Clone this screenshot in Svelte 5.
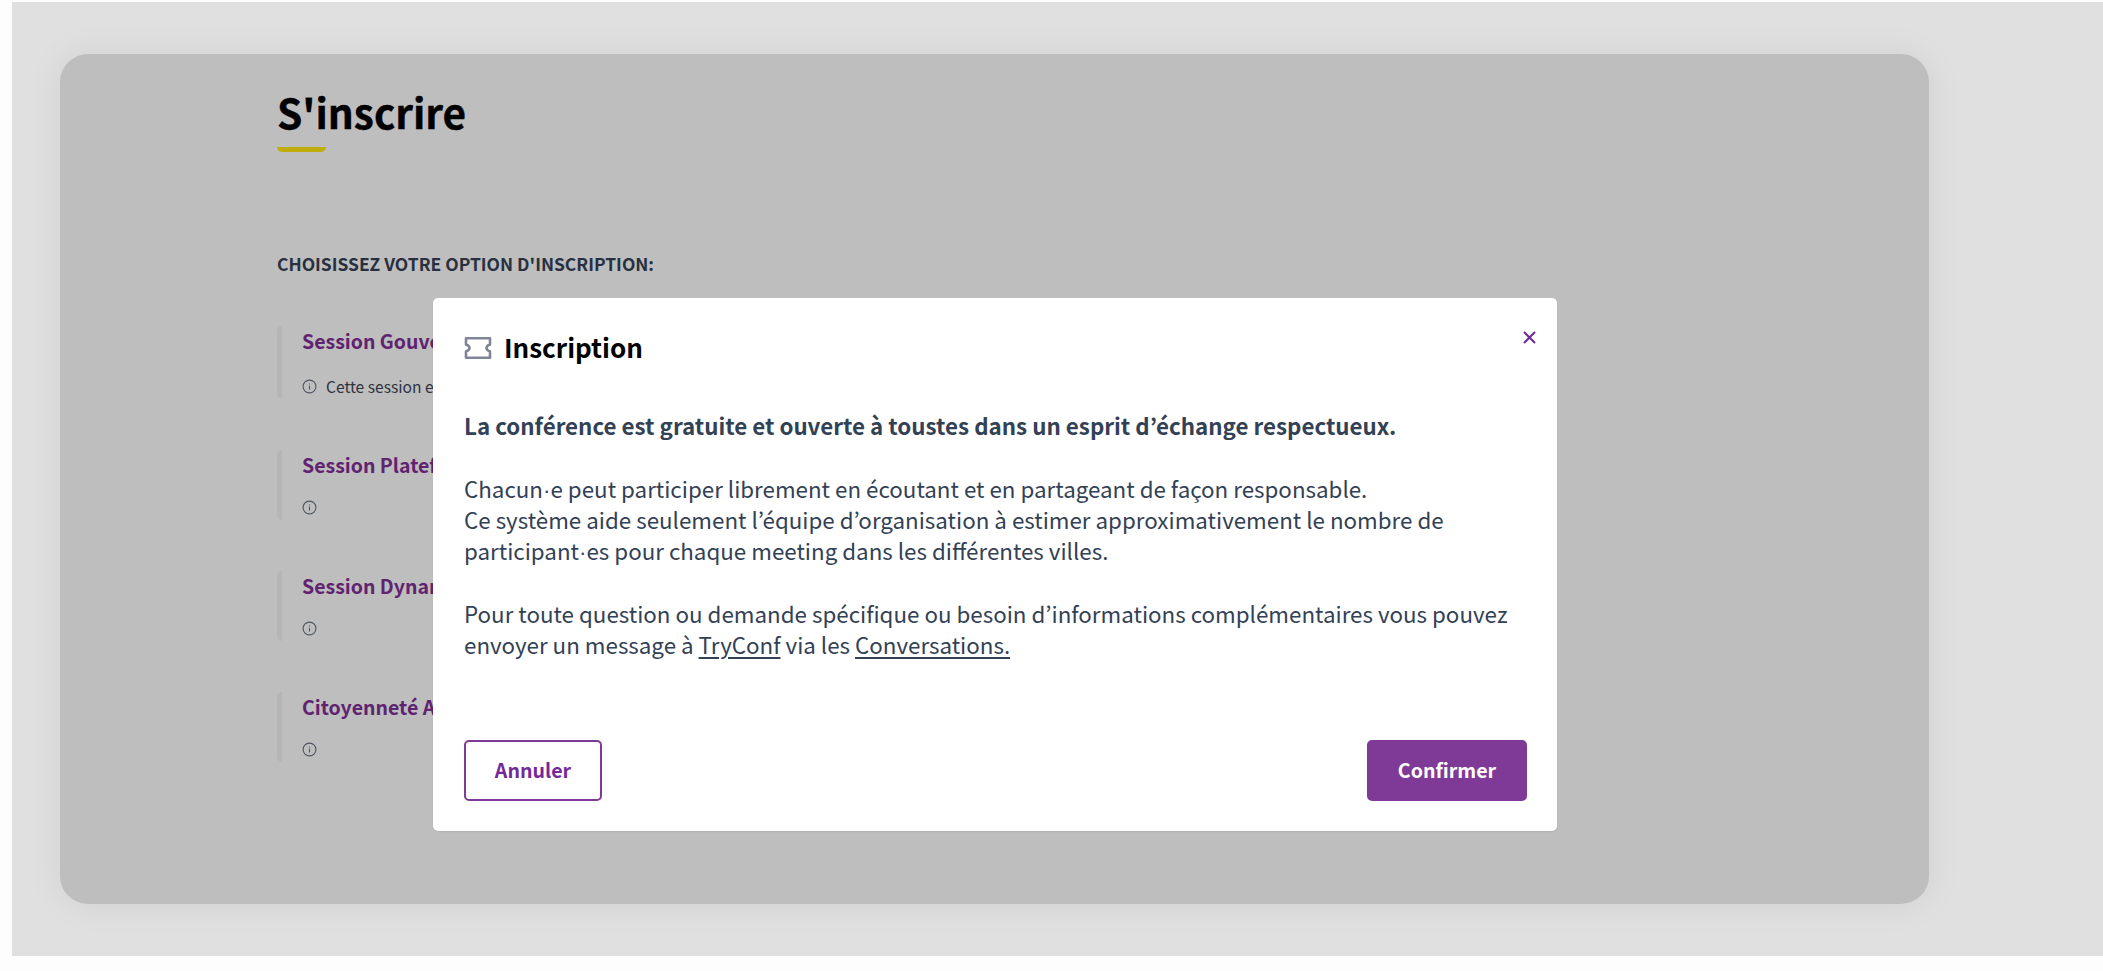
<script>
  const sessions = [
    { title: "Session Gouvernance", note: "Cette session est" },
    { title: "Session Plateformes", note: "" },
    { title: "Session Dynamiques", note: "" },
    { title: "Citoyenneté Active", note: "" }
  ];
</script>

<div class="page">
  <main class="panel">
    <h1>S'inscrire</h1>
    <div class="underline"></div>
    <p class="label">CHOISISSEZ VOTRE OPTION D'INSCRIPTION:</p>
    <ul class="sessions">
      {#each sessions as s}
        <li class:has-note={s.note}>
          <div class="s-title">{s.title}</div>
          <div class="s-note">
            <svg width="15" height="15" viewBox="0 0 15 15" fill="none" stroke="#4e5561" stroke-width="1.1">
              <circle cx="7.5" cy="7.5" r="6.4" />
              <path d="M7.5 6.8v3.8M7.5 4.4v1" />
            </svg>
            <span>{s.note}</span>
          </div>
        </li>
      {/each}
    </ul>
  </main>

  <div class="modal">
    <button class="close" aria-label="Fermer">
      <svg width="15" height="15" viewBox="0 0 15 15" fill="none" stroke="#702c95" stroke-width="2.1">
        <path d="M2 2l11 11M13 2L2 13" />
      </svg>
    </button>
    <header>
      <svg width="28" height="24" viewBox="0 0 28 24" fill="none" stroke="#7f8593" stroke-width="2.6" stroke-linejoin="round">
        <path d="M2 2.200h24v6.300c-2 .7-3.500 2-3.500 3.500s1.500 2.800 3.500 3.500v6.300H2v-6.300c2-.7 3.500-2 3.500-3.500S4 9.200 2 8.500z" />
      </svg>
      <h2>Inscription</h2>
    </header>
    <p class="lead">La conférence est gratuite et ouverte à toustes dans un esprit d’échange respectueux.</p>
    <p>Chacun<span class="dot">·</span>e peut participer librement en écoutant et en partageant de façon responsable.<br />
      Ce système aide seulement l’équipe d’organisation à estimer approximativement le nombre de participant<span class="dot">·</span>es pour chaque meeting dans les différentes villes.</p>
    <p>Pour toute question ou demande spécifique ou besoin d’informations complémentaires vous pouvez envoyer un message à <a href="#tryconf">TryConf</a> via les <a href="#conversations">Conversations.</a></p>
    <footer>
      <button class="btn ghost">Annuler</button>
      <button class="btn solid">Confirmer</button>
    </footer>
  </div>
</div>

<style>
  :global(body) {
    margin: 0;
    background: #fdfdfd;
    font-family: "Noto Sans CJK JP", "Noto Sans", sans-serif;
  }
  .page {
    position: relative;
    margin: 2px 0 0 12px;
    height: 954px;
    padding: 52px 0 0 48px;
    box-sizing: border-box;
    background: #e0e0e0;
    overflow: hidden;
  }
  .panel {
    width: 1869px;
    height: 850px;
    box-sizing: border-box;
    padding: 32px 0 0 217px;
    background: #bebebe;
    border-radius: 28px;
    box-shadow: 0 0 36px rgba(0, 0, 0, 0.07);
  }
  h1 {
    margin: 0;
    font-size: 40.600px;
    line-height: 52px;
    font-weight: 700;
    color: #000;
    -webkit-text-stroke: 0.4px #000;
  }
  .underline {
    width: 49px;
    height: 5px;
    margin-top: 9px;
    background: #c0ac0a;
    border-radius: 0 0 5px 5px;
  }
  .label {
    margin: 100px 0 0;
    font-size: 17.450px;
    line-height: 24px;
    font-weight: 700;
    color: #28303f;
  }
  .sessions {
    list-style: none;
    padding: 0;
    margin: 50px 0 0;
    display: flex;
    flex-direction: column;
    gap: 50.500px;
  }
  .sessions li {
    height: 70.500px;
    box-sizing: border-box;
    border-left: 5px solid #b5b6b8;
    border-radius: 5px;
    padding-left: 20px;
  }
  .sessions li.has-note {
    height: 73px;
  }
  .s-title {
    font-size: 19.500px;
    line-height: 28px;
    font-weight: 700;
    color: #5f2370;
    margin-top: 1px;
  }
  .s-note {
    display: flex;
    align-items: center;
    gap: 9px;
    height: 20px;
    margin-top: 19px;
    font-size: 15.600px;
    color: #2c323d;
  }
  .has-note .s-note {
    margin-top: 21px;
  }
  .modal {
    position: absolute;
    left: 421px;
    top: 296px;
    width: 1124px;
    height: 533px;
    box-sizing: border-box;
    padding: 30px 31px;
    background: #fff;
    border-radius: 5px;
    box-shadow: 0 1px 2px rgba(0, 0, 0, 0.07);
    color: #334155;
    font-size: 22.350px;
    line-height: 31.300px;
  }
  .close {
    position: absolute;
    right: 20px;
    top: 32px;
    padding: 0;
    border: 0;
    background: none;
    line-height: 0;
  }
  header {
    display: flex;
    align-items: center;
    gap: 12px;
    height: 40px;
  }
  h2 {
    margin: 0 0 2px;
    font-size: 26px;
    line-height: 38px;
    font-weight: 700;
    color: #000;
  }
  .modal p {
    margin: 0 0 31.300px;
  }
  .modal .lead {
    margin-top: 42px;
    font-weight: 700;
  }
  .dot {
    font-family: "Liberation Sans", sans-serif;
    line-height: 0;
  }
  a {
    color: inherit;
    text-decoration: underline;
    text-underline-offset: 3px;
  }
  footer {
    position: absolute;
    left: 31px;
    right: 30px;
    bottom: 30px;
    display: flex;
    justify-content: space-between;
  }
  .btn {
    height: 61px;
    box-sizing: border-box;
    border-radius: 5px;
    border: 2px solid #7f3a98;
    padding-bottom: 3px;
    font-family: inherit;
    font-size: 19.600px;
    font-weight: 700;
  }
  .ghost {
    width: 138px;
    background: #fff;
    color: #74299a;
  }
  .solid {
    width: 160px;
    background: #7f3a98;
    color: #fff;
  }
</style>
